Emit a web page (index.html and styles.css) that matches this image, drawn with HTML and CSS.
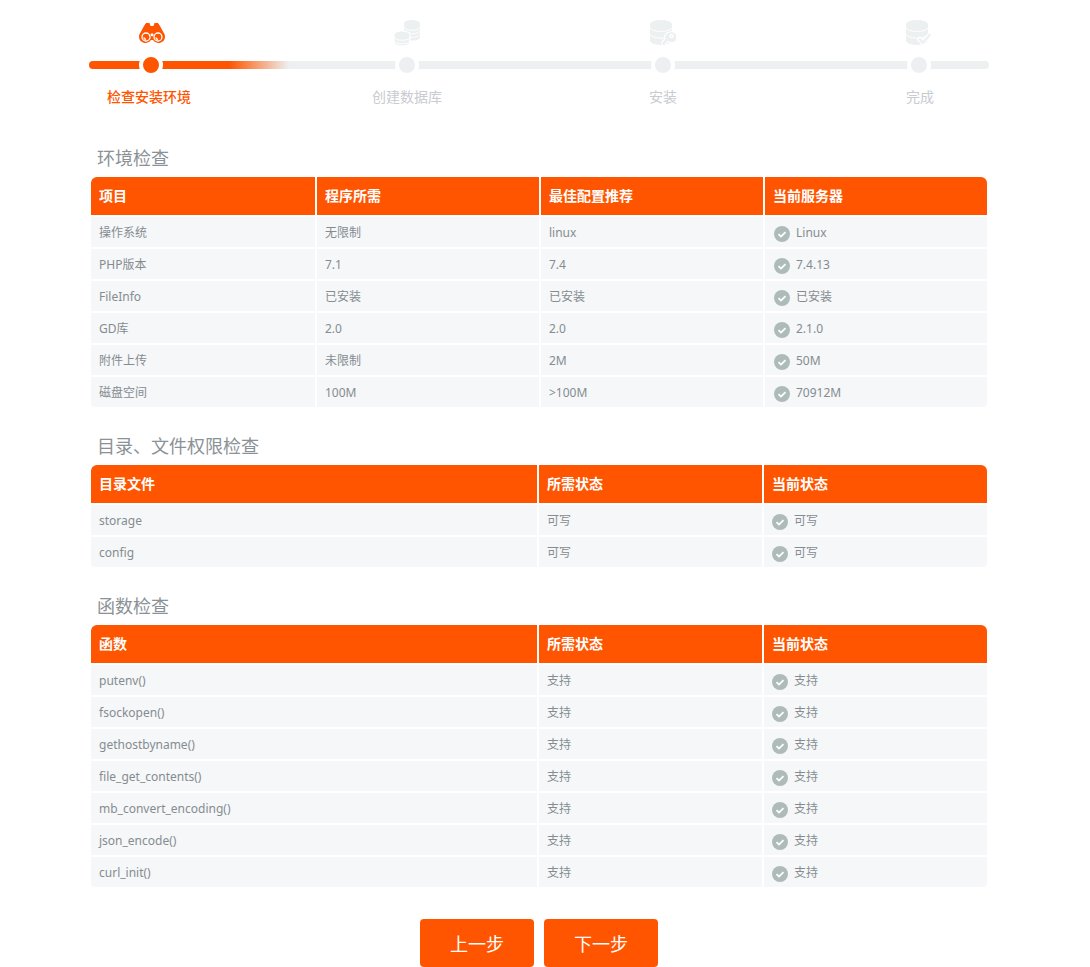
FILE: index.html
```html
<!DOCTYPE html>
<html lang="en">
<head>
  <meta charset="UTF-8" />
  <title>安装向导</title>
  <link rel="stylesheet" href="styles.css">
</head>
<body>

<div class="main">

  <!-- install steps -->
  <div class="steps">
    <div class="track"><div class="track-fill"></div></div>

    <div class="step active">
      <svg class="step-icon" width="26" height="26" viewBox="0 0 26 26">
        <path d="M7 3h3.500l1 3h3l1-3H19l2 3 3.500 6.500A6.500 6.500 0 0 1 26 16.500a6.500 6.500 0 0 1-12 3.500h-2a6.500 6.500 0 0 1-12-3.500 6.500 6.500 0 0 1 1.500-4L5 6z"/>
        <circle class="lens" cx="7" cy="17" r="4"/>
        <circle class="lens" cx="19" cy="17" r="4"/>
        <circle class="dot" cx="13" cy="14.800" r="1.500"/>
        <path class="glint" d="M4.800 17.300a2.300 2.300 0 0 0 2.300 2"/>
        <path class="glint" d="M16.800 17.300a2.300 2.300 0 0 0 2.300 2"/>
      </svg>
      <div class="dot-mark"></div>
      <div class="step-name">检查安装环境</div>
    </div>

    <div class="step">
      <svg class="step-icon" width="26" height="26" viewBox="0 0 26 26">
        <path d="M10 3.300a8 3.300 0 0 1 16 0v14a8 3.300 0 0 1-16 0z"/>
        <path class="band" d="M10 7a8 3.300 0 0 0 16 0M10 10.500a8 3.300 0 0 0 16 0M10 14a8 3.300 0 0 0 16 0"/>
        <path class="halo" d="M0 14.300a8 3.300 0 0 1 16 0v8.400a8 3.300 0 0 1-16 0z"/>
        <path class="band" d="M0 17a8 3.300 0 0 0 16 0M0 20.500a8 3.300 0 0 0 16 0"/>
      </svg>
      <div class="dot-mark"></div>
      <div class="step-name">创建数据库</div>
    </div>

    <div class="step">
      <svg class="step-icon" width="26" height="26" viewBox="0 0 26 26">
        <path d="M0 4a11 4 0 0 1 22 0v17a11 4 0 0 1-22 0z"/>
        <path class="band" d="M0 7.500a11 4 0 0 0 22 0M0 14a11 4 0 0 0 22 0"/>
        <path class="halo" d="M20 12a5.500 5.500 0 0 0-5.300 7L12 22v3.500h3.500v-1.500l1.500-.5.500-1.500 1-.3A5.500 5.500 0 1 0 20 12zm1.500 2.500a1.600 1.600 0 1 1 0 3.200 1.600 1.600 0 0 1 0-3.200z" fill-rule="evenodd"/>
      </svg>
      <div class="dot-mark"></div>
      <div class="step-name">安装</div>
    </div>

    <div class="step last">
      <svg class="step-icon" width="26" height="26" viewBox="0 0 26 26">
        <path d="M0 4a11 4 0 0 1 22 0v17a11 4 0 0 1-22 0z"/>
        <path class="band" d="M0 7.500a11 4 0 0 0 22 0M0 14a11 4 0 0 0 22 0"/>
        <path class="halo" d="M11.500 19.500l2.500-2.500 3 3L23.500 12.500l2.500 2.500-9 10.500z"/>
      </svg>
      <div class="dot-mark"></div>
      <div class="step-name">完成</div>
    </div>
  </div>

  <h3 class="title">环境检查</h3>
  <table class="check-table four">
    <thead>
      <tr><th>项目</th><th>程序所需</th><th>最佳配置推荐</th><th>当前服务器</th></tr>
    </thead>
    <tbody>
      <tr><td>操作系统</td><td>无限制</td><td>linux</td><td><span class="ok"><svg class="ok-icon" viewBox="0 0 16 16"><circle cx="8" cy="8" r="8"/><path d="M4.500 8.200l2.500 2.400 4.500-4.500"/></svg>Linux</span></td></tr>
      <tr><td>PHP版本</td><td>7.1</td><td>7.4</td><td><span class="ok"><svg class="ok-icon" viewBox="0 0 16 16"><circle cx="8" cy="8" r="8"/><path d="M4.500 8.200l2.500 2.400 4.500-4.500"/></svg>7.4.13</span></td></tr>
      <tr><td>FileInfo</td><td>已安装</td><td>已安装</td><td><span class="ok"><svg class="ok-icon" viewBox="0 0 16 16"><circle cx="8" cy="8" r="8"/><path d="M4.500 8.200l2.500 2.400 4.500-4.500"/></svg>已安装</span></td></tr>
      <tr><td>GD库</td><td>2.0</td><td>2.0</td><td><span class="ok"><svg class="ok-icon" viewBox="0 0 16 16"><circle cx="8" cy="8" r="8"/><path d="M4.500 8.200l2.500 2.400 4.500-4.500"/></svg>2.1.0</span></td></tr>
      <tr><td>附件上传</td><td>未限制</td><td>2M</td><td><span class="ok"><svg class="ok-icon" viewBox="0 0 16 16"><circle cx="8" cy="8" r="8"/><path d="M4.500 8.200l2.500 2.400 4.500-4.500"/></svg>50M</span></td></tr>
      <tr><td>磁盘空间</td><td>100M</td><td>&gt;100M</td><td><span class="ok"><svg class="ok-icon" viewBox="0 0 16 16"><circle cx="8" cy="8" r="8"/><path d="M4.500 8.200l2.500 2.400 4.500-4.500"/></svg>70912M</span></td></tr>
    </tbody>
  </table>

  <h3 class="title">目录、文件权限检查</h3>
  <table class="check-table three">
    <thead>
      <tr><th>目录文件</th><th>所需状态</th><th>当前状态</th></tr>
    </thead>
    <tbody>
      <tr><td>storage</td><td>可写</td><td><span class="ok"><svg class="ok-icon" viewBox="0 0 16 16"><circle cx="8" cy="8" r="8"/><path d="M4.500 8.200l2.500 2.400 4.500-4.500"/></svg>可写</span></td></tr>
      <tr><td>config</td><td>可写</td><td><span class="ok"><svg class="ok-icon" viewBox="0 0 16 16"><circle cx="8" cy="8" r="8"/><path d="M4.500 8.200l2.500 2.400 4.500-4.500"/></svg>可写</span></td></tr>
    </tbody>
  </table>

  <h3 class="title">函数检查</h3>
  <table class="check-table three">
    <thead>
      <tr><th>函数</th><th>所需状态</th><th>当前状态</th></tr>
    </thead>
    <tbody>
      <tr><td>putenv()</td><td>支持</td><td><span class="ok"><svg class="ok-icon" viewBox="0 0 16 16"><circle cx="8" cy="8" r="8"/><path d="M4.500 8.200l2.500 2.400 4.500-4.500"/></svg>支持</span></td></tr>
      <tr><td>fsockopen()</td><td>支持</td><td><span class="ok"><svg class="ok-icon" viewBox="0 0 16 16"><circle cx="8" cy="8" r="8"/><path d="M4.500 8.200l2.500 2.400 4.500-4.500"/></svg>支持</span></td></tr>
      <tr><td>gethostbyname()</td><td>支持</td><td><span class="ok"><svg class="ok-icon" viewBox="0 0 16 16"><circle cx="8" cy="8" r="8"/><path d="M4.500 8.200l2.500 2.400 4.500-4.500"/></svg>支持</span></td></tr>
      <tr><td>file_get_contents()</td><td>支持</td><td><span class="ok"><svg class="ok-icon" viewBox="0 0 16 16"><circle cx="8" cy="8" r="8"/><path d="M4.500 8.200l2.500 2.400 4.500-4.500"/></svg>支持</span></td></tr>
      <tr><td>mb_convert_encoding()</td><td>支持</td><td><span class="ok"><svg class="ok-icon" viewBox="0 0 16 16"><circle cx="8" cy="8" r="8"/><path d="M4.500 8.200l2.500 2.400 4.500-4.500"/></svg>支持</span></td></tr>
      <tr><td>json_encode()</td><td>支持</td><td><span class="ok"><svg class="ok-icon" viewBox="0 0 16 16"><circle cx="8" cy="8" r="8"/><path d="M4.500 8.200l2.500 2.400 4.500-4.500"/></svg>支持</span></td></tr>
      <tr><td>curl_init()</td><td>支持</td><td><span class="ok"><svg class="ok-icon" viewBox="0 0 16 16"><circle cx="8" cy="8" r="8"/><path d="M4.500 8.200l2.500 2.400 4.500-4.500"/></svg>支持</span></td></tr>
    </tbody>
  </table>

  <div class="actions">
    <button class="btn">上一步</button>
    <button class="btn">下一步</button>
  </div>

</div>

</body>
</html>
```

FILE: styles.css
```css
html, body {
  margin: 0;
  padding: 0;
  background: #fff;
}

body {
  padding-right: 12px;
  font-family: "Noto Sans", "Noto Sans CJK SC", sans-serif;
  font-size: 12px;
  color: #858c90;
}

.main {
  width: 900px;
  margin: 0 auto;
}

/* steps */
.steps {
  position: relative;
  display: grid;
  grid-template-columns: repeat(4, 124px);
  column-gap: 132px;
  padding-top: 20px;
  height: 119px;
  box-sizing: border-box;
}

.track {
  position: absolute;
  top: 61px;
  left: 0;
  width: 100%;
  height: 8px;
  border-radius: 4px;
  background: #ecf0f1;
  overflow: hidden;
}

.track-fill {
  width: 200px;
  height: 8px;
  background: linear-gradient(to right, #ff5500 70%, rgba(255, 85, 0, 0.5) 85%, #ecf0f1);
}

.step {
  position: relative;
  display: flex;
  flex-direction: column;
  align-items: center;
  color: #c8cbd0;
  font-size: 14px;
}

.step-icon {
  display: block;
  height: 26px;
  fill: #ecf0f1;
}

.step.active {
  color: #ff5500;
  font-weight: 500;
}

.step.active .step-icon {
  fill: #ff5500;
  margin-left: 2px;
}

.step.active .step-name {
  margin-right: 4px;
}

.step.last .step-name {
  margin-left: 2px;
}

.lens {
  fill: #ff5500 !important;
  stroke: #fff;
  stroke-width: 1.300;
}

.dot {
  fill: #fff !important;
}

.glint {
  fill: none !important;
  stroke: #fff;
  stroke-width: 1.200;
}

.band {
  fill: none;
  stroke: #fff;
  stroke-width: 0.900;
}

.halo {
  stroke: #fff;
  stroke-width: 1.200;
}

.dot-mark {
  width: 16px;
  height: 16px;
  margin-top: 7px;
  border: 4px solid #fff;
  border-radius: 50%;
  background: #ecf0f1;
}

.step.active .dot-mark {
  background: #ff5500;
}

.step-name {
  margin-top: 8px;
  height: 24px;
  line-height: 24px;
  white-space: nowrap;
}

/* tables */
.title {
  margin: 20px 0 0 8px;
  height: 38px;
  line-height: 38px;
  font-size: 18px;
  font-weight: normal;
  color: #8a9296;
}

.check-table {
  width: 900px;
  table-layout: fixed;
  border-collapse: separate;
  border-spacing: 2px;
  margin-top: -2px;
  margin-bottom: -2px;
}

.check-table th {
  height: 38px;
  box-sizing: border-box;
  padding: 0 8px 2px;
  background: #ff5500;
  color: #fff;
  font-size: 14px;
  font-weight: bold;
  text-align: left;
}

.check-table td {
  height: 30px;
  padding: 0 8px;
  background: #f5f7f9;
  text-align: left;
}

.check-table th:first-child {
  border-top-left-radius: 6px;
}

.check-table th:last-child {
  border-top-right-radius: 6px;
}

.check-table tr:last-child td:first-child {
  border-bottom-left-radius: 4px;
}

.check-table tr:last-child td:last-child {
  border-bottom-right-radius: 4px;
}

.four th:first-child {
  width: 224px;
}

.three th:nth-child(2), .three th:nth-child(3) {
  width: 223px;
}

.ok {
  display: flex;
  align-items: center;
  gap: 6px;
}

.ok-icon {
  width: 16px;
  height: 16px;
  margin: 4px 0 0 1px;
  flex: none;
}

.ok-icon circle {
  fill: #aebcb9;
}

.ok-icon path {
  fill: none;
  stroke: #fff;
  stroke-width: 1.800;
}

.three .ok-icon {
  margin-left: 0;
}

/* buttons */
.actions {
  display: flex;
  justify-content: center;
  gap: 10px;
  margin-top: 32px;
}

.btn {
  width: 114px;
  height: 48px;
  border: none;
  border-radius: 4px;
  background: #ff5500;
  color: #fff;
  font-family: inherit;
  font-size: 18px;
  cursor: pointer;
}
```
